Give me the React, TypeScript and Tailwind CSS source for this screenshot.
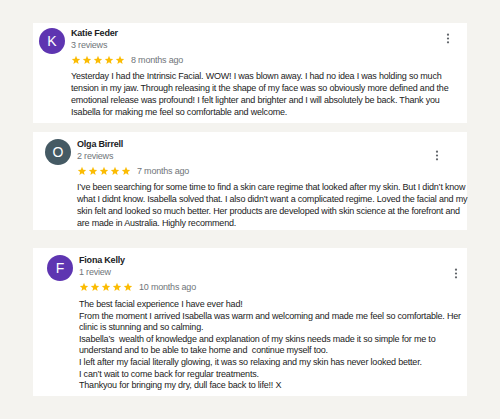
import React from "react";

type CardProps = {
  letter: string;
  color: string;
  name: string;
  reviews: string;
  ago: string;
  lines: string[];
  cardClass: string;
  bodyClass: string;
  dotsClass: string;
};

function Stars() {
  return (
    <div className="flex gap-[1px]">
      {[0, 1, 2, 3, 4].map((i) => (
        <svg key={i} width="10" height="10" viewBox="0 0 24 24">
          <path
            d="M12 2l2.9 6.9 7.1.6-5.4 4.7 1.6 7.1L12 17.6 5.8 21.3l1.6-7.1L2 9.5l7.1-.6z"
            fill="#fbbc04"
          />
        </svg>
      ))}
    </div>
  );
}

function Dots() {
  return (
    <svg width="4" height="11" viewBox="0 0 4 11">
      <circle cx="2" cy="1.7" r="1.1" fill="#5f6368" />
      <circle cx="2" cy="5.5" r="1.1" fill="#5f6368" />
      <circle cx="2" cy="9.3" r="1.1" fill="#5f6368" />
    </svg>
  );
}

function Card(p: CardProps) {
  return (
    <div className={`bg-white flex ${p.cardClass}`}>
      <div
        className={`w-[26px] h-[26px] rounded-full flex items-center justify-center text-white text-[14px] shrink-0 ${p.color}`}
      >
        {p.letter}
      </div>
      <div className="flex flex-col ml-[6px] flex-1 min-w-0 mt-[-1px] tracking-[-0.2px]">
        <div className="text-[9px] leading-[12px] font-bold text-[#202124]">{p.name}</div>
        <div className="text-[9px] leading-[12px] text-[#70757a]">{p.reviews}</div>
        <div className="flex items-center gap-[6px] mt-[3px]">
          <Stars />
          <span className="text-[9px] leading-[12px] text-[#70757a]">{p.ago}</span>
        </div>
        <div className={`text-[9px] text-[#222] whitespace-pre ${p.bodyClass}`}>
          {p.lines.map((l, i) => (
            <div key={i}>{l}</div>
          ))}
        </div>
      </div>
      <div className={`shrink-0 ${p.dotsClass}`}>
        <Dots />
      </div>
    </div>
  );
}

export default function App() {
  return (
    <div className="w-[500px] h-[419px] bg-[#f4f3ef] pt-[23px] px-[33px] flex flex-col font-['Liberation_Sans',Arial,sans-serif]">
      <Card
        letter="K"
        color="bg-[#5e35b1]"
        name="Katie Feder"
        reviews="3 reviews"
        ago="8 months ago"
        lines={[
          "Yesterday I had the Intrinsic Facial. WOW! I was blown away. I had no idea I was holding so much",
          "tension in my jaw. Through releasing it the shape of my face was so obviously more defined and the",
          "emotional release was profound! I felt lighter and brighter and I will absolutely be back. Thank you",
          "Isabella for making me feel so comfortable and welcome.",
        ]}
        cardClass="h-[100px] pl-[6px] pt-[5px] pr-[17px]"
        bodyClass="leading-[12px] mt-[4px]"
        dotsClass="pt-[5px]"
      />
      <div className="h-[9px]" />
      <Card
        letter="O"
        color="bg-[#455a64]"
        name="Olga Birrell"
        reviews="2 reviews"
        ago="7 months ago"
        lines={[
          "I\u2019ve been searching for some time to find a skin care regime that looked after my skin. But I didn\u2019t know",
          "what I didnt know. Isabella solved that. I also didn\u2019t want a complicated regime. Loved the facial and my",
          "skin felt and looked so much better. Her products are developed with skin science at the forefront and",
          "are made in Australia. Highly recommend.",
        ]}
        cardClass="h-[98px] pl-[12px] pt-[7px] pr-[28px]"
        bodyClass="leading-[12px] mt-[4px]"
        dotsClass="pt-[11px]"
      />
      <div className="h-[18px]" />
      <Card
        letter="F"
        color="bg-[#5e35b1]"
        name="Fiona Kelly"
        reviews="1 review"
        ago="10 months ago"
        lines={[
          "The best facial experience I have ever had!",
          "From the moment I arrived Isabella was warm and welcoming and made me feel so comfortable. Her",
          "clinic is stunning and so calming.",
          "Isabella\u2019s  wealth of knowledge and explanation of my skins needs made it so simple for me to",
          "understand and to be able to take home and  continue myself too.",
          "I left after my facial literally glowing, it was so relaxing and my skin has never looked better.",
          "I can\u2019t wait to come back for regular treatments.",
          "Thankyou for bringing my dry, dull face back to life!! X",
        ]}
        cardClass="h-[148px] pl-[14px] pt-[7px] pr-[9px]"
        bodyClass="leading-[11.6px] mt-[6px]"
        dotsClass="pt-[13px]"
      />
    </div>
  );
}
